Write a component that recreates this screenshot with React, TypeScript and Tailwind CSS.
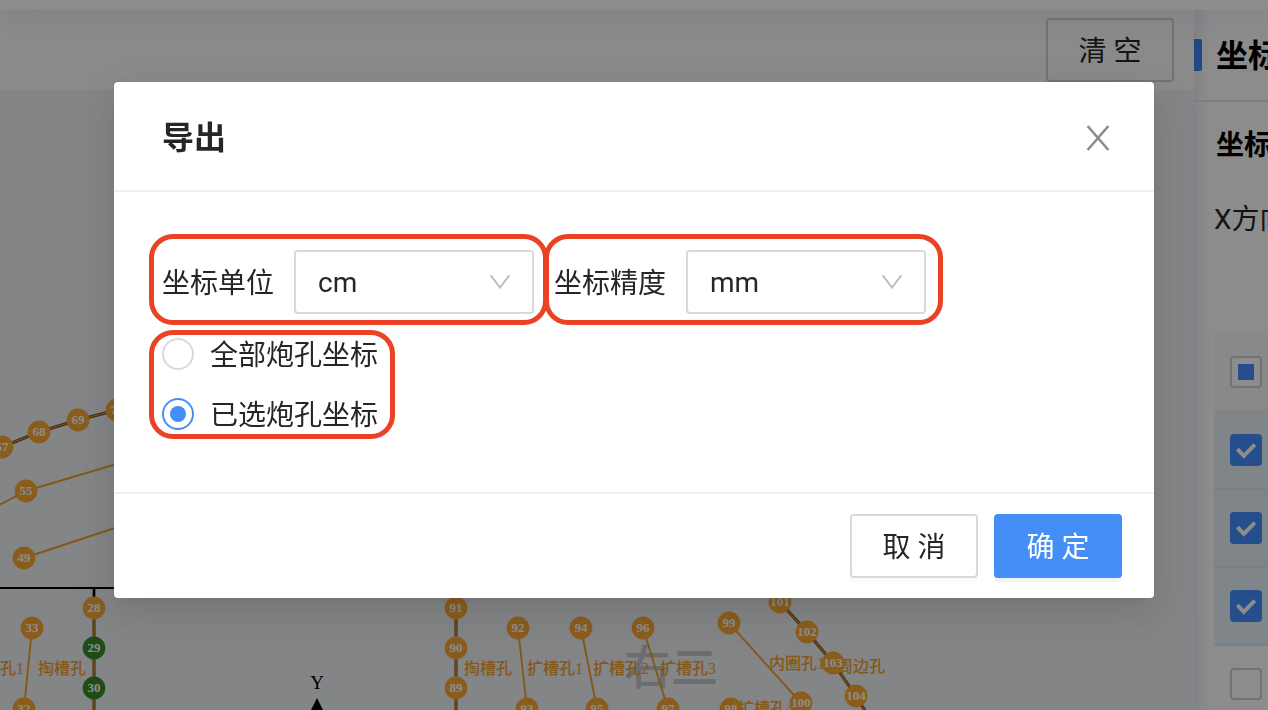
import React, { useState } from 'react';

interface HoleNode {
  id: string;
  x: number;
  y: number;
  picked?: boolean;
}

interface HoleLabel {
  text: string;
  x: number;
  y: number;
}

const nodes: HoleNode[] = [
  { id: '67', x: 2, y: 447 },
  { id: '68', x: 39, y: 432 },
  { id: '69', x: 78, y: 420 },
  { id: '70', x: 117, y: 410 },
  { id: '55', x: 26, y: 491 },
  { id: '49', x: 24, y: 558 },
  { id: '28', x: 94, y: 608 },
  { id: '29', x: 94, y: 648, picked: true },
  { id: '30', x: 94, y: 688, picked: true },
  { id: '33', x: 32, y: 628 },
  { id: '32', x: 24, y: 709 },
  { id: '91', x: 456, y: 608 },
  { id: '90', x: 456, y: 648 },
  { id: '89', x: 456, y: 688 },
  { id: '92', x: 518, y: 628 },
  { id: '93', x: 527, y: 709 },
  { id: '94', x: 581, y: 628 },
  { id: '95', x: 597, y: 709 },
  { id: '96', x: 643, y: 628 },
  { id: '97', x: 668, y: 709 },
  { id: '98', x: 731, y: 709 },
  { id: '99', x: 729, y: 623 },
  { id: '100', x: 801, y: 703 },
  { id: '101', x: 780, y: 602 },
  { id: '102', x: 807, y: 632 },
  { id: '103', x: 833, y: 663 },
  { id: '104', x: 856, y: 696 },
];

const labels: HoleLabel[] = [
  { text: '孔1', x: 0, y: 674 },
  { text: '掏槽孔', x: 38, y: 674 },
  { text: '掏槽孔', x: 464, y: 674 },
  { text: '扩槽孔1', x: 527, y: 674 },
  { text: '扩槽孔2', x: 593, y: 674 },
  { text: '扩槽孔3', x: 660, y: 674 },
  { text: '内圈孔1', x: 769, y: 669 },
  { text: '周边孔', x: 837, y: 672 },
  { text: '扩槽孔4', x: 738, y: 714 },
];

// contour lines carry a dark outline under the orange stroke
const contours = [
  '-20,455 2,447 39,432 78,420 117,410',
  '94,588 94,720',
  '456,590 456,720',
  '780,602 807,632 833,663 856,696 872,722',
];

const links = [
  '-20,515 26,491 130,460',
  '24,558 130,523',
  '32,628 24,709',
  '518,628 527,709',
  '581,628 597,709',
  '643,628 668,709',
  '729,623 801,703',
];

const HoleCanvas: React.FC = () => (
  <svg width="1194" height="620" viewBox="0 90 1194 620" className="block shrink-0">
    <text
      x="624"
      y="684"
      fontSize="47"
      fill="#c4c6ca"
      className="font-['Noto_Sans_CJK_SC',sans-serif] font-medium"
    >
      右二
    </text>
    <path d="M0 588H130" stroke="#000" strokeWidth="2" />
    {contours.map((points) => (
      <g key={points} fill="none">
        <polyline points={points} stroke="#5a4018" strokeWidth="3" />
        <polyline points={points} stroke="#d28c2c" strokeWidth="1.6" />
      </g>
    ))}
    <path d="M94 588V600" stroke="#000" strokeWidth="2" />
    {links.map((points) => (
      <polyline key={points} points={points} fill="none" stroke="#f0a030" strokeWidth="1.9" />
    ))}
    <g fontSize="16" fill="#f0a030" className="font-['Liberation_Serif','Noto_Sans_CJK_SC',serif] font-medium">
      {labels.map((label) => (
        <text key={`${label.text}-${label.x}`} x={label.x} y={label.y}>
          {label.text}
        </text>
      ))}
    </g>
    <g
      fontSize="13"
      fill="#fff"
      textAnchor="middle"
      className="font-['Liberation_Serif',serif] font-bold"
    >
      {nodes.map((node) => (
        <g key={node.id}>
          <circle cx={node.x} cy={node.y} r="11.4" fill={node.picked ? '#3a8a26' : '#fbaa36'} />
          <text x={node.x} y={node.y + 4}>
            {node.id}
          </text>
        </g>
      ))}
    </g>
    <text x="317" y="689" fontSize="19" textAnchor="middle" className="font-['Liberation_Serif',serif]">
      Y
    </text>
    <path d="M317 698l7 14h-14z" />
  </svg>
);

type RowState = 'partial' | 'on' | 'off';

const rows: { state: RowState; className: string }[] = [
  { state: 'partial', className: 'bg-[#fafafa]' },
  { state: 'on', className: 'bg-[#e8f3f8]' },
  { state: 'on', className: 'bg-[#e8f3f8]' },
  { state: 'on', className: 'bg-[#e8f3f8]' },
  { state: 'off', className: 'bg-white' },
];

const RowCheckbox: React.FC<{ state: RowState; label: string }> = ({ state, label }) => (
  <span className="relative block size-8">
    <input
      type="checkbox"
      aria-label={label}
      defaultChecked={state === 'on'}
      className="block size-8 appearance-none rounded-sm border-2 border-[#d0d0d0] bg-white checked:border-[#448fff] checked:bg-[#448fff]"
    />
    <svg viewBox="0 0 32 32" className="pointer-events-none absolute inset-0 size-8">
      {state === 'on' && (
        <path d="M7.4 15.2l6.4 6.6L24.8 10.6" fill="none" stroke="#fff" strokeWidth="4" />
      )}
      {state === 'partial' && <path d="M8 8h16v16H8z" fill="#448fff" />}
    </svg>
  </span>
);

const SidePanel: React.FC = () => (
  <aside className="w-[74px] shrink-0 overflow-hidden bg-white whitespace-nowrap shadow-[inset_16px_0_16px_-14px_rgba(30,60,120,0.14)]">
    <div className="flex h-23 items-center gap-3.5 border-b-2 border-[#e8e8e8]">
      <span className="h-8 w-2 shrink-0 rounded-r-xs bg-[#4080f0]" />
      <h2 className="pt-0.5 text-[32px] leading-10 font-bold text-black">坐标</h2>
    </div>
    <h3 className="mt-5 ml-5.5 pt-0.5 text-[28px] leading-11 font-bold text-black">坐标</h3>
    <p className="mt-7.5 ml-5 text-[28px] leading-11 text-[#262626]">X方向</p>
    <table className="mt-[92px] ml-5 w-full border-separate border-spacing-0">
      <tbody>
        {rows.map((row, i) => (
          <tr key={i} className={row.className}>
            <td className="h-[78px] border-b-2 border-black/4 px-4 py-0">
              <RowCheckbox state={row.state} label={i === 0 ? '全选' : `选择第${i}行`} />
            </td>
          </tr>
        ))}
      </tbody>
    </table>
  </aside>
);

interface UnitSelectProps {
  id: string;
  label: string;
  value: string;
  onChange: (value: string) => void;
}

const UnitSelect: React.FC<UnitSelectProps> = ({ id, label, value, onChange }) => (
  <div className="flex items-center gap-5">
    <label htmlFor={id} className="shrink-0 pt-1">
      {label}
    </label>
    <div className="relative w-60">
      <select
        id={id}
        value={value}
        onChange={(e) => onChange(e.target.value)}
        className="block h-16 w-full appearance-none rounded-sm border-2 border-[#d9d9d9] bg-white px-[22px] pt-0.5 outline-none"
      >
        <option value="mm">mm</option>
        <option value="cm">cm</option>
        <option value="m">m</option>
      </select>
      <svg
        viewBox="0 0 20 14"
        className="pointer-events-none absolute top-[25px] right-6 h-3.5 w-5"
        fill="none"
        stroke="#bfbfbf"
        strokeWidth="2"
      >
        <path d="M.8 .4L10 12.6L19.2 .4" />
      </svg>
    </div>
  </div>
);

interface RangeRadioProps {
  label: string;
  checked: boolean;
  onChange: () => void;
}

const RangeRadio: React.FC<RangeRadioProps> = ({ label, checked, onChange }) => (
  <label className="flex h-8 items-center gap-4">
    <input
      type="radio"
      name="range"
      checked={checked}
      onChange={onChange}
      className="grid size-8 appearance-none place-content-center rounded-full border-2 border-[#d9d9d9] bg-white checked:border-[#448ef7] checked:before:size-4 checked:before:rounded-full checked:before:bg-[#448ef7]"
    />
    <span className="pt-1">{label}</span>
  </label>
);

const ExportDialog: React.FC = () => {
  const [unit, setUnit] = useState('cm');
  const [precision, setPrecision] = useState('mm');
  const [range, setRange] = useState('selected');

  return (
    <div
      role="dialog"
      aria-labelledby="export-title"
      className="w-full max-w-[1040px] rounded-sm bg-white text-[28px] text-[#262626] shadow-[0_6px_12px_-8px_rgba(0,0,0,0.12),0_12px_32px_rgba(0,0,0,0.08),0_18px_56px_16px_rgba(0,0,0,0.05)]"
    >
      <header className="flex h-[110px] items-center justify-between border-b-2 border-[#f0f0f0] pt-1 pr-11 pl-12">
        <h1 id="export-title" className="text-[32px] leading-11 font-bold">
          导出
        </h1>
        <button type="button" aria-label="关闭" className="text-[#8c8c8c]">
          <svg viewBox="0 0 24 26" className="h-[26px] w-6" fill="none" stroke="currentColor" strokeWidth="2.6">
            <path d="M1.6 1L22.4 25M22.4 1L1.6 25" />
          </svg>
        </button>
      </header>

      <div className="flex flex-col items-start gap-[5px] px-[35px] pt-[42px] pb-[53px]">
        <div className="flex">
          <div className="rounded-3xl border-[5px] border-[#eb4226] pt-[11px] pr-[9px] pb-1.5 pl-2">
            <UnitSelect id="unit" label="坐标单位" value={unit} onChange={setUnit} />
          </div>
          <div className="-ml-1 rounded-3xl border-[5px] border-[#eb4226] pt-[11px] pr-3 pb-1.5 pl-[5px]">
            <UnitSelect id="precision" label="坐标精度" value={precision} onChange={setPrecision} />
          </div>
        </div>
        <div className="flex flex-col gap-7 rounded-3xl border-[5px] border-[#eb4226] pt-[3px] pr-3 pb-1 pl-2">
          <RangeRadio label="全部炮孔坐标" checked={range === 'all'} onChange={() => setRange('all')} />
          <RangeRadio
            label="已选炮孔坐标"
            checked={range === 'selected'}
            onChange={() => setRange('selected')}
          />
        </div>
      </div>

      <footer className="flex justify-end gap-4 border-t-2 border-[#f0f0f0] px-8 py-5">
        <button
          type="button"
          className="h-16 w-32 rounded-sm border-2 border-[#d9d9d9] bg-white pt-1 shadow-[0_4px_0_rgba(0,0,0,0.015)]"
        >
          取 消
        </button>
        <button
          type="button"
          className="h-16 w-32 rounded-sm bg-[#448ef7] pt-1 text-white shadow-[0_4px_0_rgba(0,0,0,0.045)]"
        >
          确 定
        </button>
      </footer>
    </div>
  );
};

export default function App() {
  return (
    <div className="flex h-screen flex-col overflow-hidden bg-white font-[Roboto,'Noto_Sans_CJK_SC',sans-serif]">
      <div className="relative h-2.5 shrink-0 bg-white shadow-[0_0_32px_rgba(30,80,160,0.26)]" />
      <div className="flex min-h-0 flex-1">
        <main className="flex min-w-0 flex-1 flex-col">
          <div className="flex h-20 shrink-0 items-center justify-end bg-[#fcfcfc] px-5">
            <button
              type="button"
              className="h-16 w-32 rounded-sm border-2 border-[#d0d0d0] pt-1 text-[28px] text-[#262626]"
            >
              清 空
            </button>
          </div>
          <div className="min-h-0 flex-1 overflow-hidden bg-[#f0f2f5]">
            <HoleCanvas />
          </div>
        </main>
        <SidePanel />
      </div>

      <div className="fixed inset-0 flex items-start justify-center bg-black/45 pt-[82px]">
        <ExportDialog />
      </div>
    </div>
  );
}
